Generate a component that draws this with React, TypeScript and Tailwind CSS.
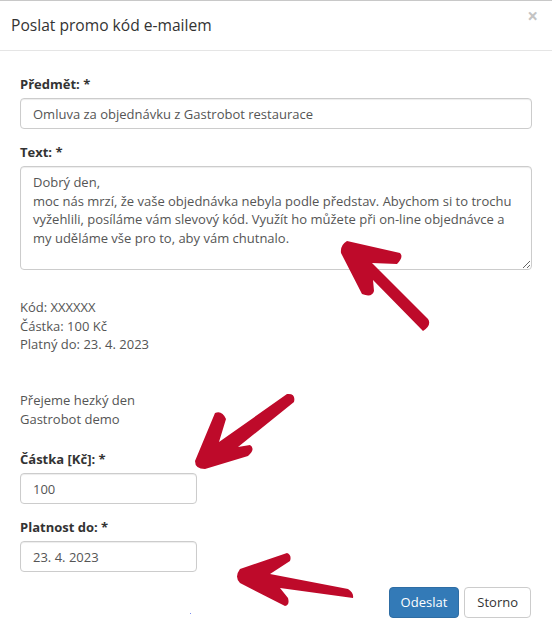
import React from 'react';

const message =
  'Dobrý den,\nmoc nás mrzí, že vaše objednávka nebyla podle představ. Abychom si to trochu vyžehlili, posíláme vám slevový kód. Využít ho můžete při on-line objednávce a my uděláme vše pro to, aby vám chutnalo.';

// ručně kreslené šipky přes formulář
const Arrows: React.FC = () => (
  <svg className="pointer-events-none absolute inset-0" width="552" height="640" viewBox="0 0 552 640">
    <g fill="#be0a2a">
      <path d="M347,240 L400,252 Q404,256 397,263 L372,262 L428,318 Q432,324 423,330 L373,279 L374,290 Q372,297 362,293 L341,252 Q340,244 347,240 Z" />
      <path d="M195,460 L215,412 Q222,409 226,418 L219,441 L287,393 Q296,392 294,401 L238,446 L250,444 Q256,448 248,455 L205,468 Q195,468 195,460 Z" />
      <path d="M240,568 L287,552 Q292,554 290,560 L270,573 L348,588 Q354,592 353,597 L280,587 L288,597 Q290,604 285,605 L240,582 Q234,576 240,568 Z" />
    </g>
  </svg>
);

const Label: React.FC<{ children: React.ReactNode }> = ({ children }) => (
  <label className="block text-[13px] leading-[19px] font-bold text-[#333] mb-[4px]">{children}</label>
);

const inputCls =
  'block h-[31px] rounded-[4px] border border-[#ccc] px-3 text-[13px] text-[#555] outline-none shadow-[inset_0_1px_1px_rgba(0,0,0,0.075)]';

const App: React.FC = () => {
  return (
    <div className="relative w-[552px] h-[640px] bg-white border-t border-[#c8c8c8] font-['Open_Sans',sans-serif] text-[#333]">
      {/* Hlavička */}
      <div className="h-[50px] border-b border-[#e5e5e5] pl-[11px] pr-[14px] flex items-start justify-between">
        <h4 className="text-[15.6px] leading-[24px] mt-[12px] text-[#333]">Poslat promo kód e-mailem</h4>
        <span className="text-[19px] leading-[19px] mt-[6px] font-bold text-[#c4c4c4]">×</span>
      </div>

      {/* Tělo */}
      <div className="px-5 pt-[24px]">
        <Label>Předmět: *</Label>
        <input className={`${inputCls} w-full`} defaultValue="Omluva za objednávku z Gastrobot restaurace" />

        <div className="mt-[14px]">
          <Label>Text: *</Label>
          <textarea
            className="block w-full h-[104px] rounded-[4px] border border-[#ccc] px-3 py-[6px] text-[13px] leading-[18.6px] text-[#555] outline-none shadow-[inset_0_1px_1px_rgba(0,0,0,0.075)]"
            defaultValue={message}
          />
        </div>

        <div className="mt-[28px] text-[13px] leading-[18.6px] text-[#555]">
          <div>Kód: XXXXXX</div>
          <div>Částka: 100 Kč</div>
          <div>Platný do: 23. 4. 2023</div>
          <div className="h-[37.2px]" />
          <div>Přejeme hezký den</div>
          <div>Gastrobot demo</div>
        </div>

        <div className="mt-[22px]">
          <Label>Částka [Kč]: *</Label>
          <input className={`${inputCls} w-[177px]`} defaultValue="100" />
        </div>

        <div className="mt-[14px]">
          <Label>Platnost do: *</Label>
          <input className={`${inputCls} w-[177px]`} defaultValue="23. 4. 2023" />
        </div>

        <div className="mt-[15px] flex justify-end gap-[5px] pr-px">
          <button className="h-[31px] px-[11px] rounded-[4px] border border-[#2e6da4] bg-[#337ab7] text-[13px] text-white">
            Odeslat
          </button>
          <button className="h-[31px] px-3 rounded-[4px] border border-[#ccc] bg-white text-[13px] text-[#333]">
            Storno
          </button>
        </div>
      </div>

      <div className="absolute left-[190px] top-[612px] w-px h-px bg-[#7b8cf0]" />
      <Arrows />
    </div>
  );
};

export default App;
